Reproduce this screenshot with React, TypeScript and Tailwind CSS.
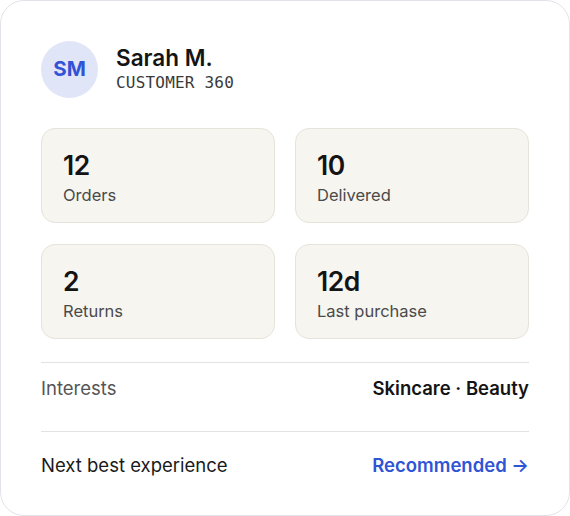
import React from "react";

type Stat = { value: string; label: string };

const stats: Stat[] = [
  { value: "12", label: "Orders" },
  { value: "10", label: "Delivered" },
  { value: "2", label: "Returns" },
  { value: "12d", label: "Last purchase" },
];

function StatCard({ value, label }: Stat) {
  return (
    <div className="h-[95px] rounded-[14px] border border-[#e6e3da] bg-[#f6f5f0] px-[21px] pt-[20px]">
      <div className="text-[26.5px] font-semibold leading-[32px] tracking-[-0.5px] text-[#141414]">
        {value}
      </div>
      <div className="mt-[3px] text-[16.5px] leading-[22px] text-[#4a4a4a]">{label}</div>
    </div>
  );
}

export default function App() {
  return (
    <div className="h-[516px] w-[570px] bg-white font-['Inter',sans-serif]">
      <div className="h-[516px] w-[570px] rounded-[24px] border border-[#e2e3e8] bg-white px-[40px] pt-[40px]">
        <div className="flex items-center gap-[18px]">
          <div className="flex h-[57px] w-[57px] items-center justify-center rounded-full bg-[#e1e5f8] text-[20.5px] font-bold text-[#3153d4]">
            SM
          </div>
          <div className="pb-[1px]">
            <div className="text-[22.5px] font-semibold leading-[26px] text-[#141414]">Sarah M.</div>
            <div className="mt-[2px] font-['DejaVu_Sans_Mono',monospace] text-[16px] leading-[20px] tracking-[0.2px] text-[#3a3a3a]">
              CUSTOMER 360
            </div>
          </div>
        </div>

        <div className="mt-[30px] grid grid-cols-2 gap-x-[20px] gap-y-[21px]">
          {stats.map((s) => (
            <StatCard key={s.label} {...s} />
          ))}
        </div>

        <div className="mt-[23px] flex h-[69px] items-start justify-between border-t border-[#e3e3e3] pt-[13px]">
          <span className="text-[18.5px] leading-[24px] text-[#555]">Interests</span>
          <span className="text-[18.5px] font-semibold leading-[24px] text-[#141414]">Skincare · Beauty</span>
        </div>
        <div className="flex items-start justify-between border-t border-[#e3e3e3] pt-[21px]">
          <span className="text-[18.5px] leading-[24px] text-[#1a1a1a]">Next best experience</span>
          <span className="text-[18.5px] font-semibold leading-[24px] text-[#2f55d4]">Recommended →</span>
        </div>
      </div>
    </div>
  );
}
